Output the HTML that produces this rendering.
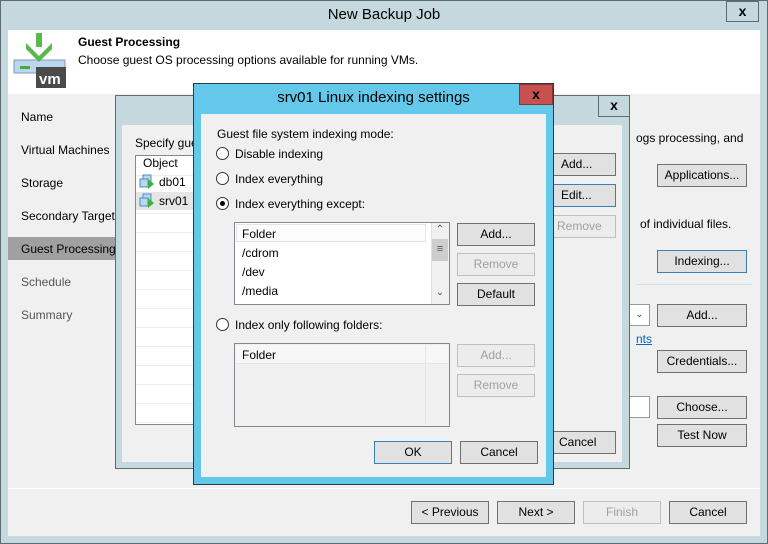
<!DOCTYPE html>
<html><head><meta charset="utf-8"><style>
*{margin:0;padding:0;box-sizing:border-box}
body{width:768px;height:544px;overflow:hidden;background:#c5d8de;font-family:"Liberation Sans",sans-serif;font-size:12px;color:#000;position:relative}
.a{position:absolute;white-space:nowrap}
.btn{position:absolute;background:#e1e1e1;border:1px solid #707070;text-align:center;line-height:20px;font-size:12px}
.dis{color:#a0a0a0;border-color:#bfbfbf;background:#ececec}
.blue{border-color:#3c7fb1}
.radio{position:absolute;width:13px;height:13px;border:1px solid #333;border-radius:50%;background:#fff}
.radio.on::after{content:"";position:absolute;left:3px;top:3px;width:5px;height:5px;border-radius:50%;background:#000}
</style></head><body>
<div class="a" style="left:0;top:0;width:768px;height:544px;border:1px solid #5f6b73"></div>
<div class="a" style="left:0;top:6px;width:768px;text-align:center;font-size:15px;color:#000">New Backup Job</div>
<div class="a" style="left:726px;top:1px;width:33px;height:21px;border:1px solid #5f6b73;text-align:center;font-weight:bold;font-size:14px;line-height:18px">x</div>
<!-- content -->
<div class="a" style="left:8px;top:30px;width:752px;height:506px;background:#f0f0f0"></div>
<div class="a" style="left:8px;top:30px;width:752px;height:64px;background:#fff"></div>
<svg class="a" style="left:0;top:0" width="80" height="95">
<rect x="14" y="60" width="51" height="13" fill="#bcd6ee" stroke="#7d9bb8"/>
<rect x="20" y="66" width="10" height="3" fill="#49a83b"/>
<rect x="36" y="33" width="6" height="14" fill="#59b94a"/>
<polygon points="26,43 39,56 52,43 52,49 39,62 26,49" fill="#59b94a"/>
<rect x="36" y="67" width="30" height="21" fill="#4a4a4a"/>
<text x="39" y="84" fill="#fff" font-family="Liberation Sans" font-weight="bold" font-size="15">vm</text>
</svg>
<div class="a" style="left:78px;top:35px;font-weight:bold">Guest Processing</div>
<div class="a" style="left:78px;top:53px">Choose guest OS processing options available for running VMs.</div>
<!-- nav -->
<div class="a" style="left:8px;top:237px;width:108px;height:23px;background:#a0a0a0"></div>
<div class="a" style="left:21px;top:110px">Name</div>
<div class="a" style="left:21px;top:143px">Virtual Machines</div>
<div class="a" style="left:21px;top:176px">Storage</div>
<div class="a" style="left:21px;top:209px">Secondary Target</div>
<div class="a" style="left:21px;top:242px">Guest Processing</div>
<div class="a" style="left:21px;top:275px;color:#555">Schedule</div>
<div class="a" style="left:21px;top:308px;color:#555">Summary</div>
<!-- right -->
<div class="a" style="left:636px;top:131px">ogs processing, and</div>
<div class="btn" style="left:657px;top:164px;width:90px;height:23px">Applications...</div>
<div class="a" style="left:640px;top:217px">of individual files.</div>
<div class="btn blue" style="left:657px;top:250px;width:90px;height:23px">Indexing...</div>
<div class="a" style="left:636px;top:284px;width:116px;height:1px;background:#d5dfe5"></div>
<div class="a" style="left:629px;top:304px;width:21px;height:22px;background:#fff;border:1px solid #999;font-size:10px;text-align:center;line-height:20px;color:#555">⌄</div>
<div class="btn" style="left:657px;top:304px;width:90px;height:23px">Add...</div>
<div class="a" style="left:636px;top:332px;color:#06c;text-decoration:underline">nts</div>
<div class="btn" style="left:657px;top:350px;width:90px;height:23px">Credentials...</div>
<div class="a" style="left:629px;top:396px;width:21px;height:22px;background:#fff;border:1px solid #999"></div>
<div class="btn" style="left:657px;top:396px;width:90px;height:23px">Choose...</div>
<div class="btn" style="left:657px;top:424px;width:90px;height:23px">Test Now</div>
<div class="a" style="left:8px;top:488px;width:752px;height:1px;background:#fff"></div>
<div class="btn" style="left:411px;top:501px;width:78px;height:23px">&lt; Previous</div>
<div class="btn" style="left:497px;top:501px;width:78px;height:23px">Next &gt;</div>
<div class="btn dis" style="left:583px;top:501px;width:78px;height:23px">Finish</div>
<div class="btn" style="left:669px;top:501px;width:78px;height:23px">Cancel</div>
<!-- middle dialog -->
<div class="a" style="left:115px;top:95px;width:515px;height:374px;background:#c5d8de;border:1px solid #5f6b73"></div>
<div class="a" style="left:598px;top:95px;width:32px;height:22px;border:1px solid #5f6b73;text-align:center;font-weight:bold;font-size:14px;line-height:19px">x</div>
<div class="a" style="left:122px;top:125px;width:500px;height:337px;background:#f0f0f0"></div>
<div class="a" style="left:135px;top:136px">Specify gue</div>
<div class="a" style="left:135px;top:155px;width:80px;height:270px;background:#fff;border:1px solid #828790;background-image:repeating-linear-gradient(#fff 0,#fff 18px,#ededed 18px,#ededed 19px);background-position:0 1px"></div>
<div class="a" style="left:136px;top:156px;width:78px;height:16px;background:#fff"></div>
<div class="a" style="left:143px;top:156px">Object</div>
<div class="a" style="left:136px;top:192px;width:78px;height:18px;background:#e5e5e5"></div>
<svg class="a" style="left:139px;top:174px" width="20" height="40">
<rect x="4" y="1" width="8" height="7" fill="#bcd6ee" stroke="#4a8cc8"/><rect x="1" y="5" width="8" height="8" fill="#bcd6ee" stroke="#4a8cc8"/><polygon points="9,5 15,10 9,15" fill="#3cb043"/>
<rect x="4" y="20" width="8" height="7" fill="#bcd6ee" stroke="#4a8cc8"/><rect x="1" y="24" width="8" height="8" fill="#bcd6ee" stroke="#4a8cc8"/><polygon points="9,24 15,29 9,34" fill="#3cb043"/>
</svg>
<div class="a" style="left:159px;top:175px">db01</div>
<div class="a" style="left:159px;top:194px">srv01</div>
<div class="btn" style="left:540px;top:153px;width:76px;height:23px;text-align:left;padding-left:20px">Add...</div>
<div class="btn blue" style="left:540px;top:184px;width:76px;height:23px;text-align:left;padding-left:20px">Edit...</div>
<div class="btn dis" style="left:540px;top:215px;width:76px;height:23px;text-align:left;padding-left:16px">Remove</div>
<div class="btn" style="left:540px;top:431px;width:76px;height:23px;text-align:left;padding-left:18px">Cancel</div>
<!-- front dialog -->
<div class="a" style="left:193px;top:83px;width:361px;height:402px;background:#63c8e9;border:1px solid #2b3a44"></div>
<div class="a" style="left:193px;top:89px;width:361px;text-align:center;font-size:15px">srv01 Linux indexing settings</div>
<div class="a" style="left:519px;top:84px;width:34px;height:21px;background:#c75050;border:1px solid #8a3434;text-align:center;font-weight:bold;font-size:14px;line-height:18px;color:#000">x</div>
<div class="a" style="left:201px;top:114px;width:345px;height:363px;background:#f0f0f0"></div>
<div class="a" style="left:217px;top:127px">Guest file system indexing mode:</div>
<div class="radio" style="left:216px;top:147px"></div><div class="a" style="left:235px;top:147px">Disable indexing</div>
<div class="radio" style="left:216px;top:172px"></div><div class="a" style="left:235px;top:172px">Index everything</div>
<div class="radio on" style="left:216px;top:197px"></div><div class="a" style="left:235px;top:197px">Index everything except:</div>
<div class="a" style="left:234px;top:222px;width:216px;height:83px;background:#fff;border:1px solid #828790"></div>
<div class="a" style="left:236px;top:224px;width:190px;height:18px;border:1px solid #e5e5e5;background:#fcfcfc"></div>
<div class="a" style="left:242px;top:227px">Folder</div>
<div class="a" style="left:242px;top:246px">/cdrom</div>
<div class="a" style="left:242px;top:265px">/dev</div>
<div class="a" style="left:242px;top:284px">/media</div>
<div class="a" style="left:431px;top:223px;width:18px;height:81px;background:#f0f0f0;border-left:1px solid #e0e0e0"></div>
<div class="a" style="left:432px;top:239px;width:16px;height:22px;background:#cdcdcd;text-align:center;font-size:11px;line-height:20px;color:#555">≡</div>
<div class="a" style="left:432px;top:224px;width:16px;text-align:center;font-size:10px;color:#555">⌃</div>
<div class="a" style="left:432px;top:287px;width:16px;text-align:center;font-size:10px;color:#555">⌄</div>
<div class="btn" style="left:457px;top:223px;width:78px;height:23px">Add...</div>
<div class="btn dis" style="left:457px;top:253px;width:78px;height:23px">Remove</div>
<div class="btn" style="left:457px;top:283px;width:78px;height:23px">Default</div>
<div class="radio" style="left:216px;top:318px"></div><div class="a" style="left:235px;top:318px">Index only following folders:</div>
<div class="a" style="left:234px;top:343px;width:216px;height:84px;background:#f0f0f0;border:1px solid #828790"></div>
<div class="a" style="left:236px;top:345px;width:212px;height:19px;border-bottom:1px solid #e5e5e5;background:#f7f7f7"></div>
<div class="a" style="left:425px;top:345px;width:1px;height:80px;background:#e5e5e5"></div>
<div class="a" style="left:242px;top:348px">Folder</div>
<div class="btn dis" style="left:457px;top:344px;width:78px;height:23px">Add...</div>
<div class="btn dis" style="left:457px;top:374px;width:78px;height:23px">Remove</div>
<div class="btn blue" style="left:374px;top:441px;width:78px;height:23px">OK</div>
<div class="btn" style="left:460px;top:441px;width:78px;height:23px">Cancel</div>
</body></html>
